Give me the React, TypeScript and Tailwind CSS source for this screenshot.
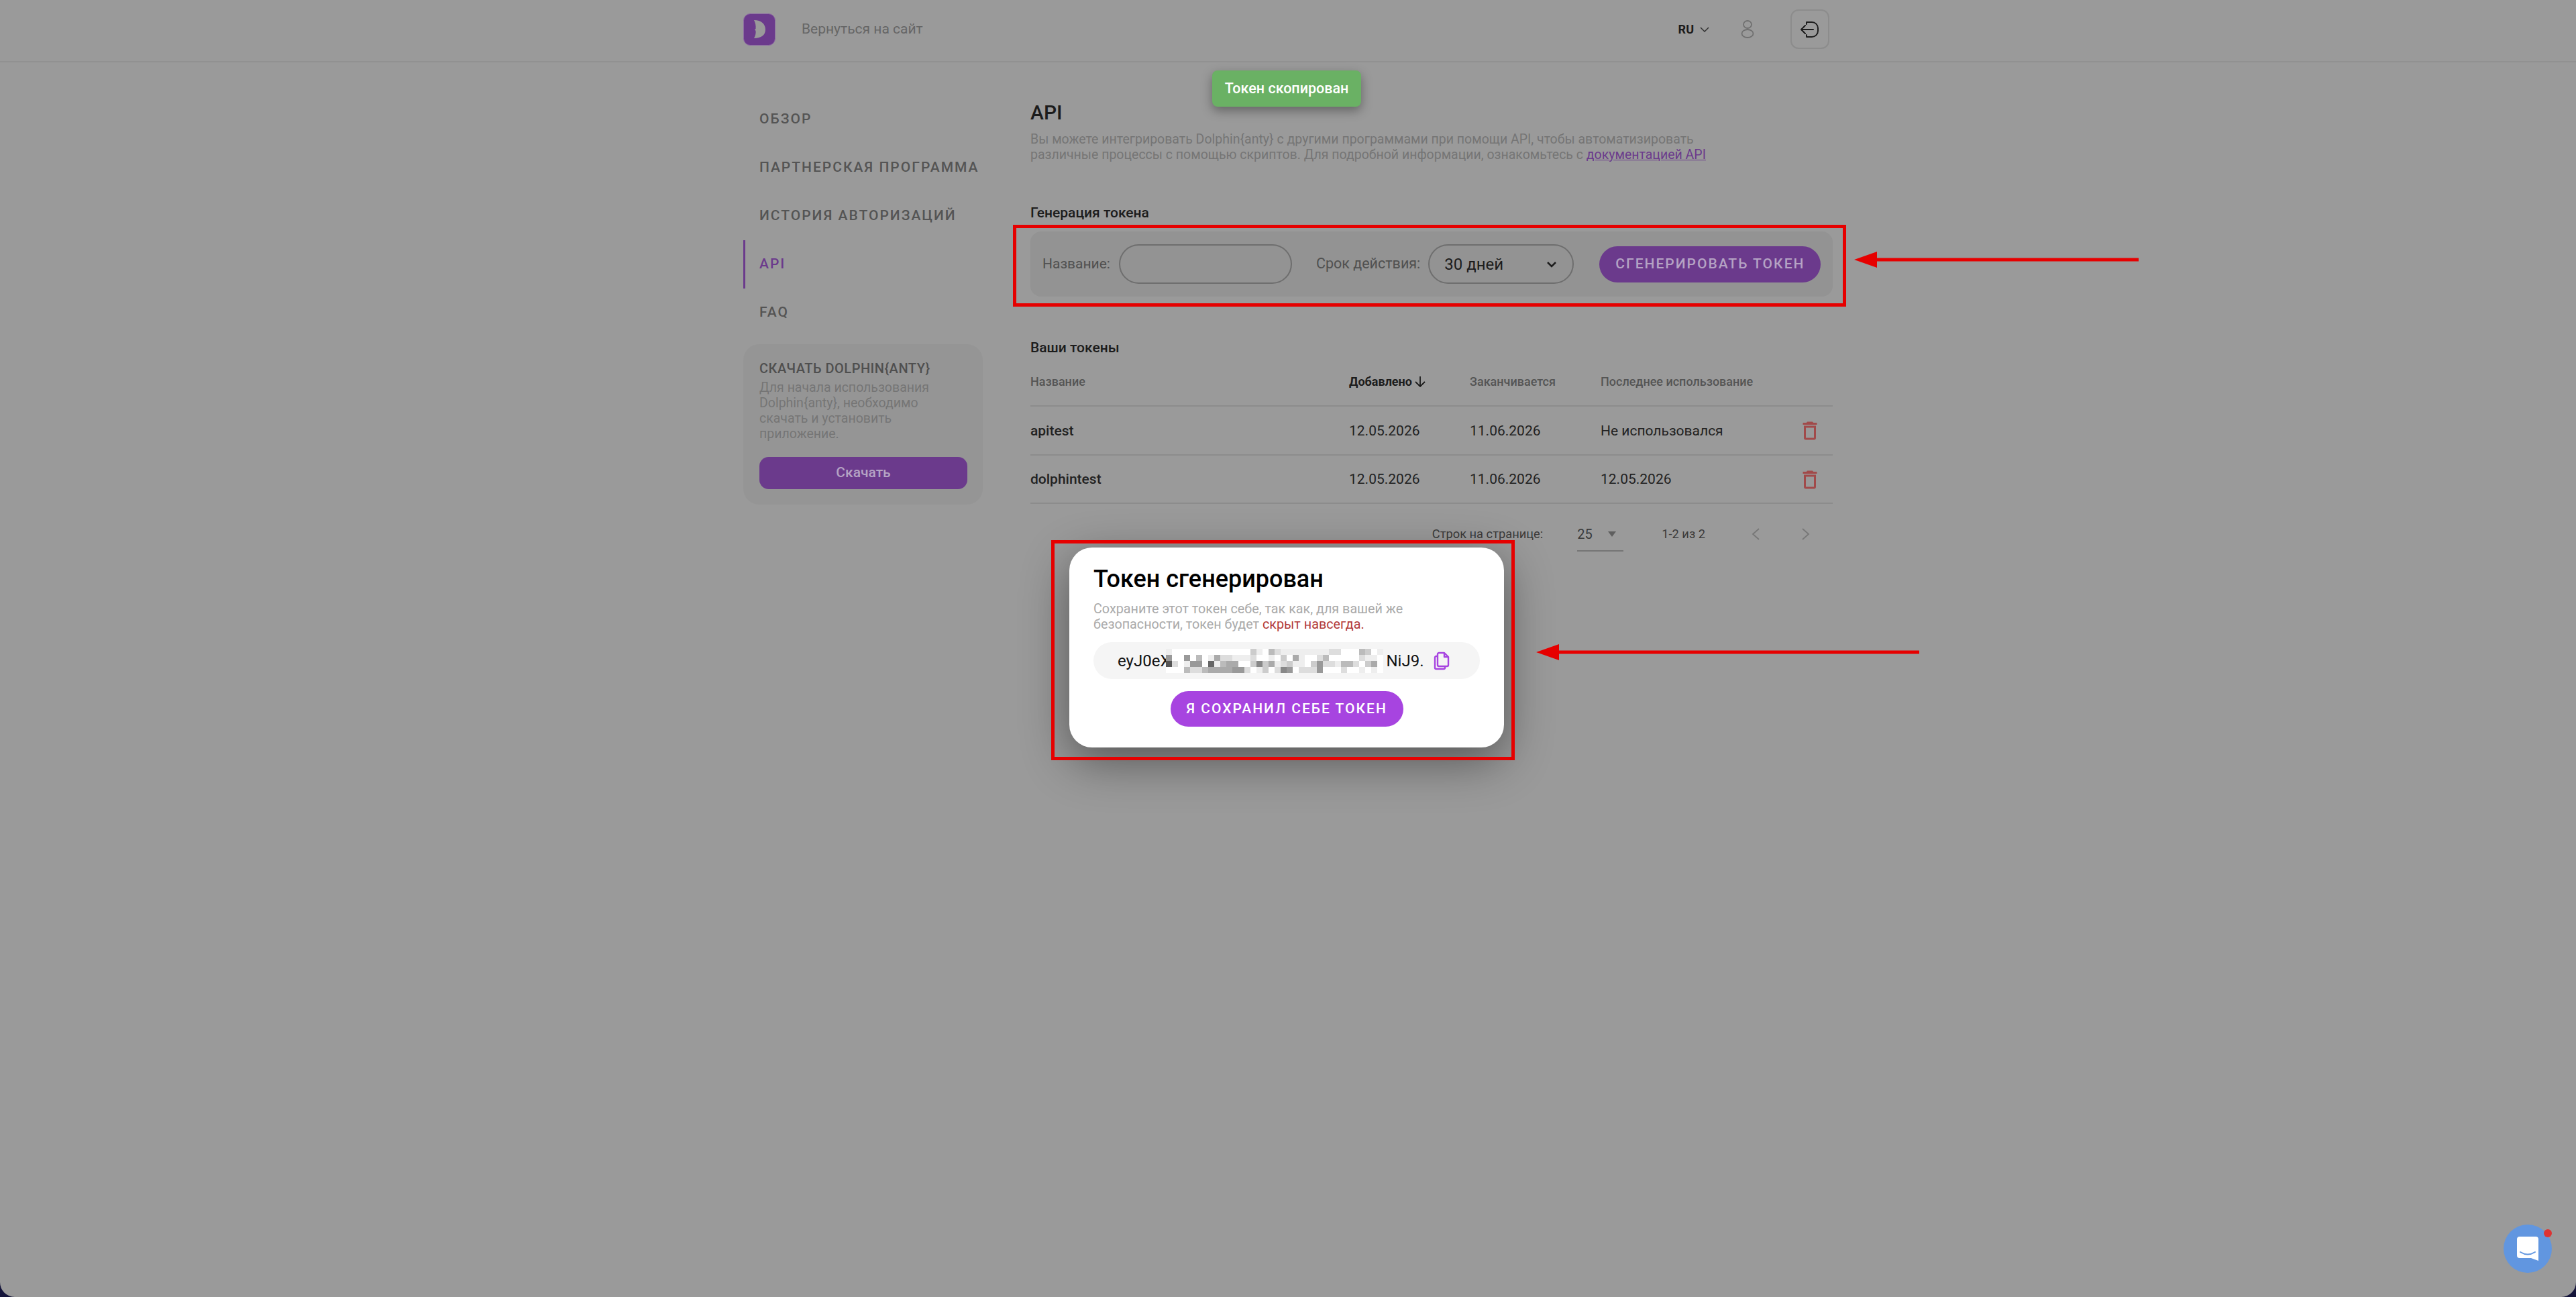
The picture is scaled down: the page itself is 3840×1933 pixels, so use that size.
import React from 'react';

const MOSAIC = [
  'efffffffffffffcefbdeeeeeeeeddfffbcfee'.slice(0, 36),
  '9ff9fbfeaddeeedffefcfaeffdbfffffdeef',
  '5dfe99f6ebaaffc8caedceefc9ddebbdfcaf'.slice(0, 36),
  'fffbddbaaaa99dfecfd89fddd9fffdffefef',
];

function Mosaic() {
  return (
    <svg width="324" height="36" viewBox="0 0 36 4" shapeRendering="crispEdges" className="shrink-0">
      {MOSAIC.flatMap((row, y) =>
        row.split('').map((c, x) => {
          const v = parseInt(c, 16) * 17;
          return <rect key={`${x}-${y}`} x={x} y={y} width="1" height="1" fill={`rgb(${v},${v},${v})`} />;
        }),
      )}
    </svg>
  );
}

function Trash() {
  return (
    <svg width="36" height="36" viewBox="0 0 24 24" fill="#a14a4a">
      <path d="M6 19a2 2 0 0 0 2 2h8a2 2 0 0 0 2-2V7H6v12M8 9h8v10H8V9m7.5-5l-1-1h-5l-1 1H5v2h14V4h-3.5z" />
    </svg>
  );
}

const nav = ['Обзор', 'Партнерская программа', 'История авторизаций', 'API', 'FAQ'];

const rows = [
  { name: 'apitest', added: '12.05.2026', ends: '11.06.2026', last: 'Не использовался' },
  { name: 'dolphintest', added: '12.05.2026', ends: '11.06.2026', last: '12.05.2026' },
];

export default function App() {
  return (
    <div className="h-[1933px] overflow-hidden bg-[#14143a] font-['Roboto',sans-serif]">
      <div className="relative h-full overflow-hidden rounded-b-[22px] bg-[#9a9a9a]">
        {/* Top bar */}
        <header className="h-[93px] border-b-2 border-[#919191]">
          <div className="mx-auto flex h-full w-[1624px] items-center">
            <svg width="48" height="48" viewBox="0 0 48 48" className="mb-[4px] shrink-0">
              <rect x="0.5" y="0.5" width="47" height="47" rx="10" fill="#6b3a8c" stroke="#8d6ba3" />
              <path
                d="M16 10C27 10 33 16 33 24C33 32 27 37 16 37C18 33 19 30 18.5 26L17 24L18.5 23C19 18 18 14 16 10Z"
                fill="#9a9a9a"
              />
            </svg>
            <a className="ml-[39px] mb-[4px] text-[21px] text-[#666666]">Вернуться на сайт</a>
            <div className="ml-auto mb-[4px] flex items-center">
              <span className="text-[18px] font-bold text-[#1c1c1c]">RU</span>
              <svg width="14" height="8" viewBox="0 0 14 8" fill="none" stroke="#333333" strokeWidth="1.5" className="ml-[9px]">
                <path d="M1 1l6 6 6-6" />
              </svg>
              <svg width="20" height="27" viewBox="0 0 20 27" fill="none" stroke="#707070" strokeWidth="1.8" className="ml-[47px]">
                <ellipse cx="10" cy="6.5" rx="6" ry="5.5" />
                <ellipse cx="10" cy="20" rx="8.5" ry="6" />
              </svg>
              <div className="ml-[54px] mr-[5px] flex h-[59px] w-[58px] items-center justify-center rounded-[12px] border-2 border-[#8c8c8c]">
                <svg width="28" height="26" viewBox="0 0 28 26" fill="none" stroke="#1c1c1c" strokeWidth="2" strokeLinecap="round" strokeLinejoin="round">
                  <path d="M9 5V2h8a9 9 0 0 1 9 9v4a9 9 0 0 1-9 9H9v-3" />
                  <path d="M1 13h18M1 13l6-6M1 13l6 6" />
                </svg>
              </div>
            </div>
          </div>
        </header>

        <div className="mx-auto flex w-[1624px]">
          {/* Sidebar */}
          <aside className="w-[428px] shrink-0 pt-[49px]">
            <nav className="flex flex-col">
              {nav.map((item) => (
                <a
                  key={item}
                  className={`flex h-[72px] items-center border-l-[3px] pl-[21px] text-[21px] font-medium uppercase tracking-[2px] ${
                    item === 'API' ? 'border-[#6b3a8c] text-[#6b3a8c]' : 'border-transparent text-[#545454]'
                  }`}
                >
                  {item}
                </a>
              ))}
            </nav>
            <div className="mt-[11px] h-[239px] w-[357px] rounded-[24px] bg-[#959595] px-[24px] pt-[24px]">
              <div className="text-[20px] font-medium uppercase leading-[24px] tracking-[0.5px] text-[#4f4f4f]">
                Скачать Dolphin{'{anty}'}
              </div>
              <p className="mt-[6px] w-[290px] text-[19.5px] leading-[22.9px] text-[#757575]">
                Для начала использования Dolphin{'{anty}'}, необходимо скачать и установить приложение.
              </p>
              <button className="mt-[22px] h-[48px] w-[310px] rounded-[14px] bg-[#6b3a8c] text-[21px] font-medium text-[#b5a3c4]">
                Скачать
              </button>
            </div>
          </aside>

          {/* Content */}
          <main className="min-w-0 flex-1">
            <h1 className="mt-[58px] text-[30px] font-medium leading-[34px] text-[#1c1c1c]">API</h1>
            <p className="mt-[11px] w-[1040px] text-[19.5px] leading-[23px] text-[#757575]">
              Вы можете интегрировать Dolphin{'{anty}'} с другими программами при помощи API, чтобы автоматизировать различные процессы с помощью скриптов. Для подробной информации, ознакомьтесь с{' '}
              <a className="text-[#6b3a8c] underline">документацией API</a>
            </p>

            <h2 className="mt-[63px] text-[21px] font-medium leading-[24px] text-[#1c1c1c]">Генерация токена</h2>
            <div className="mt-[16px] flex h-[97px] items-center rounded-[16px] bg-[#939393] pl-[18px]">
              <span className="text-[21px] text-[#505050]">Название:</span>
              <div className="ml-[13px] h-[59px] w-[258px] rounded-[30px] border-2 border-[#6e6e6e]" />
              <span className="ml-[36px] text-[21.5px] text-[#505050]">Срок действия:</span>
              <div className="ml-[12px] flex h-[59px] w-[217px] items-center rounded-[30px] border-2 border-[#6e6e6e] pl-[22px]">
                <span className="text-[24px] text-[#1c1c1c]">30 дней</span>
                <svg width="16" height="10" viewBox="0 0 16 10" fill="none" stroke="#1c1c1c" strokeWidth="2.5" className="ml-auto mr-[23px]">
                  <path d="M2 2l6 6 6-6" />
                </svg>
              </div>
              <button className="ml-[38px] h-[54px] w-[330px] rounded-[27px] bg-[#6b3a8c] text-[21px] font-medium uppercase tracking-[2px] text-[#b5a3c4]">
                Сгенерировать токен
              </button>
            </div>

            <h2 className="mt-[64px] text-[21px] font-medium leading-[24px] text-[#1c1c1c]">Ваши токены</h2>

            <div className="grid h-[76px] grid-cols-[475px_180px_195px_1fr] items-center border-b-2 border-[#8c8c8c] pt-[3px] text-[18px] font-medium text-[#555555]">
              <span>Название</span>
              <span className="flex items-center font-bold text-[#1c1c1c]">
                Добавлено
                <svg width="18" height="16" viewBox="0 0 18 16" fill="none" stroke="#1c1c1c" strokeWidth="1.8" className="ml-[3px]">
                  <path d="M9 0v15M2 8l7 7 7-7" />
                </svg>
              </span>
              <span>Заканчивается</span>
              <span>Последнее использование</span>
            </div>
            {rows.map((r) => (
              <div
                key={r.name}
                className="grid h-[72.5px] grid-cols-[475px_180px_195px_1fr] items-center border-b-2 border-[#8c8c8c] pt-[2px] text-[21px] text-[#222222]"
              >
                <span className="font-medium">{r.name}</span>
                <span>{r.added}</span>
                <span>{r.ends}</span>
                <span className="flex items-center justify-between pr-[16px]">
                  {r.last}
                  <Trash />
                </span>
              </div>
            ))}

            <div className="flex h-[90px] items-start justify-end pr-[34px] pt-[20px] text-[18.3px] text-[#3a3a3a]">
              <span className="leading-[50px]">Строк на странице:</span>
              <div className="ml-[51px] flex h-[51px] w-[69px] items-center border-b-2 border-[#757575]">
                <span className="text-[20px]">25</span>
                <svg width="12" height="8" viewBox="0 0 12 8" fill="#5f5f5f" className="ml-[23px]">
                  <path d="M0 0h12L6 8z" />
                </svg>
              </div>
              <span className="ml-[57px] leading-[50px]">1-2 из 2</span>
              <svg width="13" height="18" viewBox="0 0 13 18" fill="none" stroke="#777777" strokeWidth="1.8" className="ml-[69px] mt-[16px]">
                <path d="M11 1L2 9l9 8" />
              </svg>
              <svg width="13" height="18" viewBox="0 0 13 18" fill="none" stroke="#777777" strokeWidth="1.8" className="ml-[61px] mt-[16px]">
                <path d="M2 1l9 8-9 8" />
              </svg>
            </div>
          </main>
        </div>

        {/* Toast */}
        <div className="absolute left-[1807px] top-[105px] flex h-[54px] w-[222px] items-center justify-center rounded-[8px] bg-[#6ab164] text-[21.5px] font-medium text-white shadow-[0_6px_16px_rgba(0,0,0,0.35)]">
          Токен скопирован
        </div>

        {/* Dialog */}
        <div className="absolute left-[1594px] top-[816px] h-[298px] w-[648px] rounded-[34px] bg-white px-[36px] pt-[26px] shadow-[0_20px_70px_rgba(0,0,0,0.45)]">
          <h3 className="text-[36px] font-medium leading-[42px] text-black">Токен сгенерирован</h3>
          <p className="mt-[12px] w-[520px] text-[19.75px] leading-[23.2px] text-[#aaaaaa]">
            Сохраните этот токен себе, так как, для вашей же безопасности, токен будет{' '}
            <span className="text-[#b23a3a]">скрыт навсегда.</span>
          </p>
          <div className="mt-[15px] flex h-[55px] items-center rounded-[28px] bg-[#f5f5f5] pl-[36px] text-[24px] text-[#111111]">
            <span>eyJ0eX</span>
            <span className="-ml-[6px]">
              <Mosaic />
            </span>
            <span className="ml-[4px]">NiJ9.</span>
            <svg width="24" height="28" viewBox="0 0 24 28" fill="none" stroke="#a744e0" strokeWidth="2.4" strokeLinejoin="round" className="ml-[15px]">
              <path d="M8 2h8l6 6v12a2 2 0 0 1-2 2H8a2 2 0 0 1-2-2V4a2 2 0 0 1 2-2z" />
              <path d="M16 2v6h6" />
              <path d="M6 7H4a2 2 0 0 0-2 2v15a2 2 0 0 0 2 2h11a2 2 0 0 0 2-2v-2" />
            </svg>
          </div>
          <button className="mx-auto mt-[18px] block h-[53px] w-[347px] rounded-[27px] bg-[#a744e0] text-[21px] font-medium uppercase tracking-[2px] text-white">
            Я сохранил себе токен
          </button>
        </div>

        {/* Screenshot annotations */}
        <div className="absolute left-[1510px] top-[335px] h-[122px] w-[1242px] border-[5px] border-[#e60000]" />
        <svg width="430" height="24" viewBox="0 0 430 24" className="absolute left-[2762px] top-[375px]" fill="#e60000">
          <path d="M2 12L36 0v9.5h390v5H36V24z" />
        </svg>
        <div className="absolute left-[1567px] top-[805px] h-[328px] w-[691px] border-[5px] border-[#e60000]" />
        <svg width="575" height="24" viewBox="0 0 575 24" className="absolute left-[2288px] top-[960px]" fill="#e60000">
          <path d="M2 12L36 0v9.5h537v5H36V24z" />
        </svg>

        {/* Chat widget */}
        <div className="absolute left-[3732px] top-[1825px] flex h-[72px] w-[72px] items-center justify-center rounded-full bg-[#6196e0]">
          <svg width="32" height="36" viewBox="0 0 32 36" fill="white">
            <path d="M4 0h24a4 4 0 0 1 4 4v32l-11-4H4a4 4 0 0 1-4-4V4a4 4 0 0 1 4-4z" />
            <path d="M5 23q11 7 22 0" fill="none" stroke="#6196e0" strokeWidth="2" strokeLinecap="round" />
          </svg>
          <span className="absolute left-[60px] top-[7px] h-[12px] w-[12px] rounded-full bg-[#dd3333]" />
        </div>
      </div>
    </div>
  );
}
